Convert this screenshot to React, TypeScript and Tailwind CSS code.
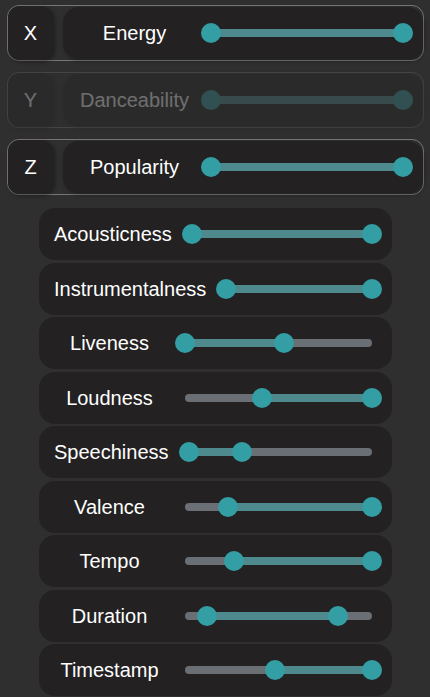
import React from 'react'

type Range = [number, number]

const axes: { axis: string; label: string; range: Range; disabled?: boolean }[] = [
  { axis: 'X', label: 'Energy', range: [0, 100] },
  { axis: 'Y', label: 'Danceability', range: [0, 100], disabled: true },
  { axis: 'Z', label: 'Popularity', range: [0, 100] },
]

const filters: { label: string; range: Range }[] = [
  { label: 'Acousticness', range: [0, 100] },
  { label: 'Instrumentalness', range: [0, 100] },
  { label: 'Liveness', range: [0, 53] },
  { label: 'Loudness', range: [41, 100] },
  { label: 'Speechiness', range: [0, 29] },
  { label: 'Valence', range: [23, 100] },
  { label: 'Tempo', range: [26, 100] },
  { label: 'Duration', range: [12, 82] },
  { label: 'Timestamp', range: [48, 100] },
]

function RangeSlider({ range }: { range: Range }) {
  const [lo, hi] = range
  return (
    <div className="flex-1 pl-[5px] pr-[20px]">
      <div className="relative h-5">
        <div className="absolute left-0 right-0 top-1/2 h-2 -translate-y-1/2 rounded-full bg-[#6a6e75]" />
        <div
          className="absolute top-1/2 h-2 -translate-y-1/2 bg-[#4e898e]"
          style={{ left: `${lo}%`, width: `${hi - lo}%` }}
        />
        {[lo, hi].map((v, i) => (
          <div
            key={i}
            className="absolute top-0 -ml-[10px] h-5 w-5 rounded-full bg-[#339ea3]"
            style={{ left: `${v}%` }}
          />
        ))}
      </div>
    </div>
  )
}

export default function App() {
  return (
    <div
      className="min-h-[697px] w-[430px] bg-[#2f2f2f] text-[20px] text-white"
      style={{ fontFamily: '"Liberation Sans", Arial, sans-serif' }}
    >
      {/* Axis selectors */}
      <div className="flex flex-col gap-[11px] pl-[7px] pr-[6px] pt-[5px]">
        {axes.map((a) => (
          <div
            key={a.axis}
            className={`flex h-[56px] items-stretch rounded-[12px] border border-[#767676] ${
              a.disabled ? 'opacity-30' : ''
            }`}
          >
            <div className="flex w-[45px] shrink-0 items-center justify-center rounded-[12px] bg-[#232122] shadow-[2px_2px_4px_rgba(0,0,0,0.35)]">
              {a.axis}
            </div>
            <div className="my-px ml-[10px] flex flex-1 items-center rounded-[16px] bg-[#232122] shadow-[1px_2px_4px_rgba(0,0,0,0.3)]">
              <div className="min-w-[143px] shrink-0 px-[15px] text-center">{a.label}</div>
              <RangeSlider range={a.range} />
            </div>
          </div>
        ))}
      </div>

      {/* Feature filters */}
      <div className="mt-[13px] flex flex-col gap-[2.5px] pl-[39px] pr-[38px] pb-px">
        {filters.map((f) => (
          <div key={f.label} className="flex h-[52px] items-center rounded-[16px] bg-[#232122]">
            <div className="min-w-[141px] shrink-0 px-[15px] text-center whitespace-nowrap">{f.label}</div>
            <RangeSlider range={f.range} />
          </div>
        ))}
      </div>
    </div>
  )
}
